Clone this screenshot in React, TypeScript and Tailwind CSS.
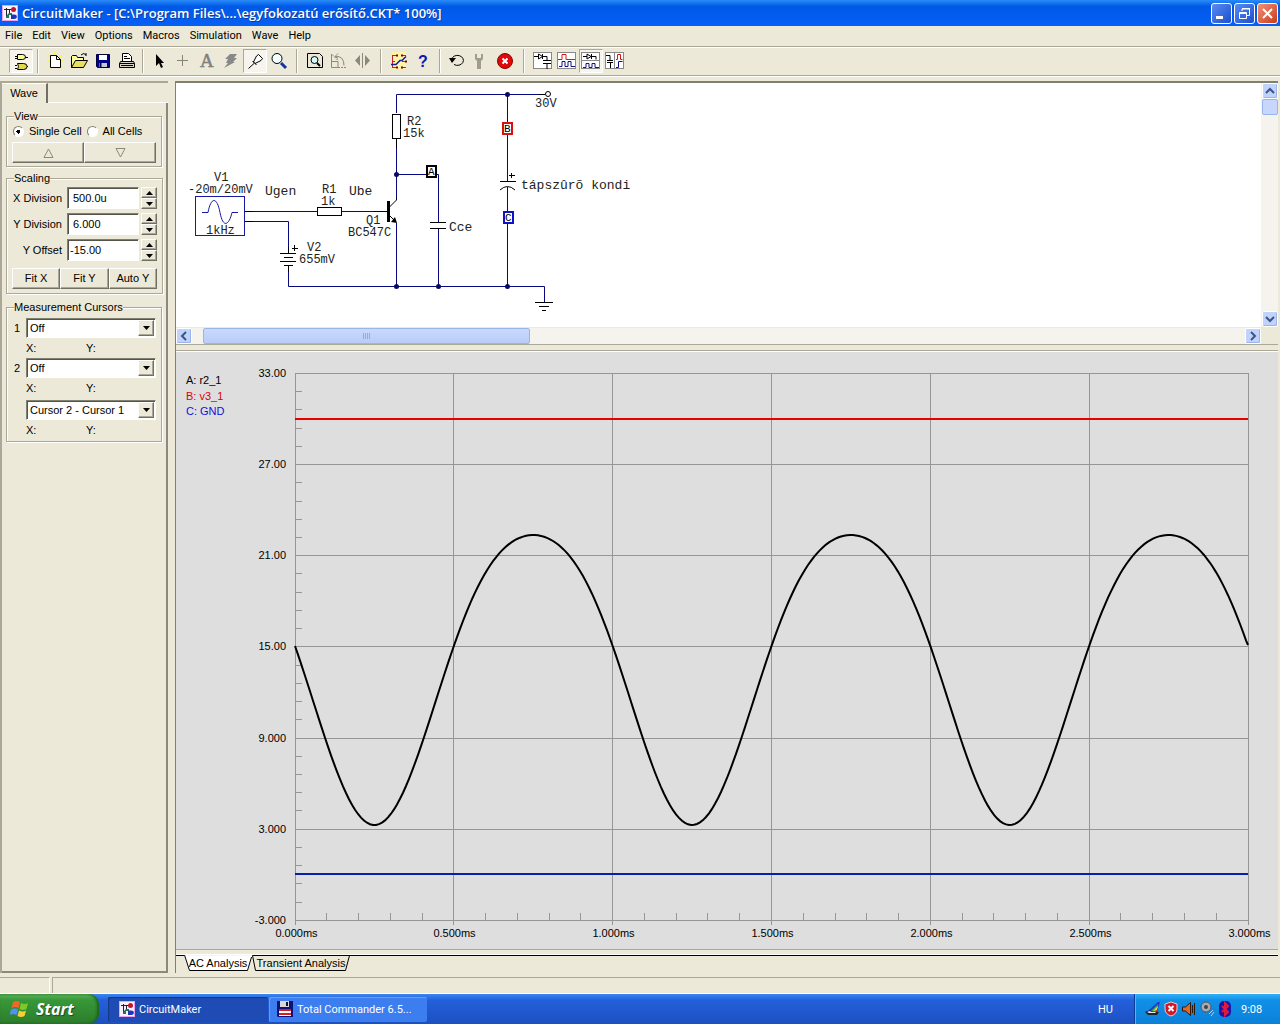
import React, { useState } from "react";
import clsx from "clsx";

const menuItems = ["File", "Edit", "View", "Options", "Macros", "Simulation", "Wave", "Help"];

// Plot geometry, in canvas units
const PLOT = { left: 295, right: 1248, top: 373, bottom: 920, zero: 646 };
const yLabels = ["33.00", "27.00", "21.00", "15.00", "9.000", "3.000", "-3.000"];
const xLabels = ["0.000ms", "0.500ms", "1.000ms", "1.500ms", "2.000ms", "2.500ms", "3.000ms"];

function gridX(i: number) {
  return Math.floor(PLOT.left + ((PLOT.right - PLOT.left) * i) / 6) + 0.5;
}

function gridY(i: number) {
  return Math.round(PLOT.top + ((PLOT.bottom - PLOT.top) * i) / 6 - 0.1) + 0.5;
}

// Collector voltage: sine with some second harmonic from the transistor
function tracePoints() {
  const points: string[] = [];
  const period = (PLOT.right - PLOT.left) / 3;
  for (let x = PLOT.left; x <= PLOT.right; x += 3) {
    const t = ((x - PLOT.left) / period) * Math.PI * 2;
    const y = PLOT.zero + 145 * Math.sin(t) + 17 * (1 - Math.cos(2 * t));
    points.push(`${x},${y.toFixed(1)}`);
  }
  points.push(`${PLOT.right},645`);
  return points.join(" ");
}

export default function App() {
  return (
    <div className="flex min-h-screen flex-col bg-[#ece9d8] font-['Liberation_Sans',Arial,sans-serif] text-[11px] leading-[13px] text-black select-none">
      <TitleBar />
      <nav className="flex h-5 items-center gap-[10px] pb-[2px] pl-[5px] font-['Roboto',sans-serif]">
        {menuItems.map((item) => (
          <button key={item} type="button">
            {item}
          </button>
        ))}
      </nav>
      <Toolbar />
      <div className="flex flex-1 pt-[5px]">
        <Sidebar />
        <main className="ml-[7px] mr-[2px] flex min-w-0 flex-1 flex-col border-t-2 border-l border-[#808070]">
          <Schematic />
          <Plot />
          <AnalysisTabs />
        </main>
      </div>
      {/* Status bar */}
      <div className="mt-1 flex h-[17px] gap-[2px] border-b border-white">
        <div className="w-[50px] border-t border-r border-t-[#aca899] border-r-white" />
        <div className="flex-1 border-t border-l border-[#aca899]" />
      </div>
      <Taskbar />
    </div>
  );
}

function AppLogo() {
  return (
    <svg viewBox="0 0 16 16" className="h-4 w-4 shrink-0" aria-hidden="true">
      <rect width="16" height="16" fill="#fdf0fd" />
      <rect x="0.5" y="0.5" width="15" height="15" fill="none" stroke="#f0a0e8" />
      <path d="M2 4.500h8M4.500 3v8M7.500 4v4" stroke="#222" fill="none" />
      <path d="M4 11l3-3h3v2H7v3H4z" fill="#1c7c50" />
      <circle cx="11.500" cy="4.500" r="2.500" fill="#c01828" />
      <path d="M9 9.500h3a2.500 2 0 0 1 0 4.500H9z" fill="#1838b8" />
    </svg>
  );
}

function TitleBar() {
  const base =
    "flex h-[21px] w-[21px] items-center justify-center rounded-[3px] border border-white text-white";
  return (
    <header className="flex h-[26px] items-center bg-linear-to-b from-[#2a8cf8] via-[#0058e6] via-25% to-[#0560f8] pr-[2px] pl-[2px]">
      <AppLogo />
      <h1 className="ml-1 flex-1 font-['Open_Sans',sans-serif] text-[13px] font-semibold text-white [text-shadow:1px_1px_0_#0c3c9c]">
        CircuitMaker - [C:\Program Files\...\egyfokozatú erősítő.CKT* 100%]
      </h1>
      <div className="flex gap-[2px]">
        <button type="button" aria-label="Minimize" className={clsx(base, "bg-linear-to-br from-[#5a8cf0] to-[#1c4cd0]")}>
          <svg viewBox="0 0 19 19" className="h-[19px] w-[19px]">
            <path d="M4 13.500h7" stroke="#fff" strokeWidth="3" />
          </svg>
        </button>
        <button type="button" aria-label="Restore" className={clsx(base, "bg-linear-to-br from-[#5a8cf0] to-[#1c4cd0]")}>
          <svg viewBox="0 0 19 19" className="h-[19px] w-[19px]" fill="none" stroke="#fff">
            <path d="M7 7V5h7.500v6.500H12M7 4.500h8" />
            <path d="M4.500 8.500h7v6h-7zM4 9.500h8" />
          </svg>
        </button>
        <button type="button" aria-label="Close" className={clsx(base, "bg-linear-to-br from-[#f09078] to-[#c83810]")}>
          <svg viewBox="0 0 19 19" className="h-[19px] w-[19px]">
            <path d="M5 5l9 9M14 5l-9 9" stroke="#fff" strokeWidth="2" />
          </svg>
        </button>
      </div>
    </header>
  );
}

function ToolButton({ label, pressed, children }: { label: string; pressed?: boolean; children: React.ReactNode }) {
  return (
    <button
      type="button"
      aria-label={label}
      className={clsx(
        "h-6 w-6 shrink-0 border",
        pressed ? "border-t-[#aca899] border-r-white border-b-white border-l-[#aca899] bg-[#f6f4ec]" : "border-transparent"
      )}
    >
      <svg viewBox="1 1 22 22" className="h-[22px] w-[22px] overflow-visible" fill="none" stroke="#000">
        {children}
      </svg>
    </button>
  );
}

function Divider({ className }: { className: string }) {
  return (
    <div className={clsx("flex shrink-0 justify-center", className)}>
      <div className="h-6 w-[2px] border-r border-l border-r-white border-l-[#aca899]" />
    </div>
  );
}

function Toolbar() {
  return (
    <div className="flex h-[30px] items-center border-t border-b border-[#aca899] pl-[9px] shadow-[inset_0_1px_0_#fff,0_1px_0_#fff]">
      <ToolButton label="Digital parts" pressed>
        <path d="M8.500 5.500h5a3 2.500 0 0 1 0 5h-5z" fill="#ffff90" />
        <path d="M6 7.500h2M6 9.500h2M16 8.500h3M6 16.500h2M6 19.500h2M16 17.500h3" />
        <path d="M8.500 14.500h6a3 2.500 0 0 1 0 6h-6q2-3 0-6z" fill="#e0d850" />
      </ToolButton>
      <Divider className="w-[10px]" />
      <ToolButton label="New">
        <path d="M5 6l14 12M6 18L19 6M12 3v3M4 12h3M17 12h3" stroke="#f8f830" strokeWidth="1.500" />
        <path d="M7.500 6.500h6l4 4v8h-10z" fill="#fff" />
        <path d="M13.500 6.500v4h4" />
      </ToolButton>
      <ToolButton label="Open">
        <path d="M4.500 18.500v-11l1-1h4l1 2h6v3" fill="#ffff9c" />
        <path d="M4.500 18.500l4-7h12l-4 7z" fill="#e8e060" />
        <path d="M14 6q3-3 5 0M19 4v3" />
      </ToolButton>
      <ToolButton label="Save">
        <path d="M5.500 5.500h13v13h-12l-1-1z" fill="#000088" stroke="#000040" />
        <path d="M8 6h8v5H8z" fill="#fff" stroke="none" />
        <path d="M8 14h8v4H8z" fill="#c8c8d0" stroke="none" />
        <path d="M9.500 14v4" stroke="#000060" strokeWidth="2" />
      </ToolButton>
      <ToolButton label="Print">
        <path d="M7.500 12v-7.500h6l3 3v4.500" fill="#fff" />
        <path d="M9 7.500h3M9 9.500h6" />
        <path d="M5.500 12.500h13l1 2v4h-15v-4z" fill="#d8d4c8" />
        <path d="M4.500 14.500h15M6 16.500h12" />
      </ToolButton>
      <Divider className="w-[8px]" />
      <ToolButton label="Arrow">
        <path d="M9 5v12l3-3 2 5 2-1-2-4h3z" fill="#000" stroke="none" />
      </ToolButton>
      <ToolButton label="Wire">
        <path d="M6 11.500h11M11.500 6v11" stroke="#888478" />
      </ToolButton>
      <ToolButton label="Text">
        <text x="5" y="18" fontSize="19" fontFamily="Liberation Serif, serif" fill="#808080" stroke="#808080" strokeWidth="0.500">
          A
        </text>
      </ToolButton>
      <ToolButton label="Delete">
        <path d="M11 5h7l-3 4h3l-4 4h2L5 19l4-5H7l2-4H6z" fill="#888" stroke="none" />
      </ToolButton>
      <ToolButton label="Probe" pressed>
        <path d="M10.500 13l3-6 2-1.500 4 4-1.500 2-6 3z" fill="#fff" />
        <path d="M9.500 12l4 4M11 14.500l-5.500 5" />
      </ToolButton>
      <ToolButton label="Zoom">
        <circle cx="10" cy="9.500" r="5" fill="#f4ffff" />
        <path d="M14 14l5 5" stroke="#1830a8" strokeWidth="3" />
      </ToolButton>
      <Divider className="w-[12px]" />
      <ToolButton label="Fit to window">
        <path d="M4.500 4.500h12l3 3v11h-15z" />
        <circle cx="11.500" cy="11" r="3.500" fill="#d0fcf8" />
        <path d="M14 14l3 3" strokeWidth="2" />
      </ToolButton>
      <ToolButton label="Rotate">
        <g stroke="#8c887c">
          <path d="M4.500 5v13.500h7M5 12.500h6v6" />
          <path d="M11 18.500h9M5 5.500l6 6" strokeDasharray="2 1" />
          <path d="M8 7.500q9-1 9 9M8 7.500l3-3M8 7.500l3 2" />
        </g>
      </ToolButton>
      <ToolButton label="Mirror">
        <path d="M11.500 4v15" stroke="#8c887c" />
        <path d="M9 6v11l-5-5.500zM14 6v11l5-5.500z" fill="#8c887c" stroke="none" />
      </ToolButton>
      <Divider className="w-[12px]" />
      <ToolButton label="Run digital options">
        <rect x="5" y="3" width="14" height="17" fill="#fff5a8" stroke="none" />
        <path d="M5 6.500h5M15 6.500h4M5 12.500h3M15 12.500h4M5 18.500h5M15 18.500h4M5.500 6v12" stroke="#c02028" />
        <path d="M4 15.500h5l4-4h2l4-4" stroke="#1020a0" strokeWidth="1.500" />
        <path d="M9 6.500h2M14 6.500h2M9 18.500h2M14 18.500h2M18 12.500h2" stroke="#800" strokeWidth="2" />
      </ToolButton>
      <ToolButton label="Help">
        <text x="7" y="18" fontSize="16" fontFamily="Liberation Sans, sans-serif" fontWeight="bold" fill="#1414b4" stroke="none">
          ?
        </text>
      </ToolButton>
      <Divider className="w-[10px]" />
      <ToolButton label="Reset">
        <path d="M6.500 10.500a6 5 0 1 1 2.500 5" />
        <path d="M4 9h7l-4 5z" fill="#000" stroke="none" />
      </ToolButton>
      <ToolButton label="Step">
        <path d="M6 5v5l2 2v8h4v-8l2-2V5h-2v4H8V5z" fill="#a09c90" stroke="none" />
      </ToolButton>
      <ToolButton label="Stop">
        <circle cx="12" cy="12" r="7.500" fill="#e00808" stroke="#900000" />
        <path d="M9.500 9.500l5 5M14.500 9.500l-5 5" stroke="#fff" strokeWidth="2" />
      </ToolButton>
      <Divider className="w-[14px]" />
      <ToolButton label="Schematic only">
        <rect x="2.500" y="3.500" width="18" height="16" fill="#fff" stroke="#888" />
        <path d="M3 7.500h4M7.500 5v5l4-2.500zM11.500 5v5M12 7.500h4v4M12 11.500h8M12 14.500h8M16 15v5" />
      </ToolButton>
      <ToolButton label="Waves only">
        <rect x="2.500" y="3.500" width="18" height="16" fill="#fff" stroke="#888" />
        <path d="M3 10.500h4v-5h4v5h9" stroke="#d01818" />
        <path d="M4 17.500h3v-5h3v5h3v-5h3v5h4" stroke="#101080" />
      </ToolButton>
      <ToolButton label="Split horizontal" pressed>
        <rect x="2.500" y="3.500" width="18" height="16" fill="#fff" stroke="#888" />
        <path d="M3 11.500h17" stroke="#888" />
        <path d="M4 7.500h4M8 5v5l4-2.500zM12.500 5v5M12 7.500h5v3" />
        <path d="M4 18.500h3v-4h3v4h3v-4h3v4h4" stroke="#101080" />
      </ToolButton>
      <ToolButton label="Split vertical">
        <rect x="2.500" y="3.500" width="18" height="16" fill="#fff" stroke="#888" />
        <path d="M11.500 4v15" stroke="#888" />
        <path d="M3 6.500h4v5M4 11.500h6M4 13.500h6M7.500 14v5" />
        <path d="M13 10.500h1.500v-5h3v5h2" stroke="#d01818" />
        <path d="M13 18.500h2.500v-6h4" stroke="#101080" />
      </ToolButton>
    </div>
  );
}

const raised = "border border-t-white border-l-white border-r-[#716f64] border-b-[#716f64] shadow-[inset_-1px_-1px_0_#aca899]";
const sunken = "border border-t-[#808070] border-l-[#808070] border-r-white border-b-white shadow-[inset_1px_1px_0_#55534a]";

function Group({ title, className, children }: { title: string; className?: string; children: React.ReactNode }) {
  return (
    <fieldset className={clsx("border border-[#aca899] px-[5px] shadow-[1px_1px_0_#fff,inset_1px_1px_0_#fff]", className)}>
      <legend className="ml-[2px] h-[14px] bg-[#ece9d8] leading-[14px]">{title}</legend>
      {children}
    </fieldset>
  );
}

function Spinner({ label, value }: { label: string; value: string }) {
  const [text, setText] = useState(value);
  return (
    <div className="flex h-[22px] items-center">
      <label htmlFor={label} className="w-[55px] pr-[5px] text-right whitespace-nowrap">
        {label}
      </label>
      <input
        id={label}
        value={text}
        onChange={(e) => setText(e.target.value)}
        className={clsx("h-[22px] w-[72px] bg-white outline-none", text.startsWith("-") ? "pl-[2px]" : "pl-[5px]", sunken)}
      />
      <div className="ml-[2px] flex flex-col">
        <button type="button" aria-label={label + " up"} className={clsx("flex h-[11px] w-4 items-center justify-center", raised)}>
          <svg viewBox="0 0 7 4" className="h-1 w-[7px]">
            <path d="M0 4L3.500 0L7 4z" />
          </svg>
        </button>
        <button type="button" aria-label={label + " down"} className={clsx("flex h-[11px] w-4 items-center justify-center", raised)}>
          <svg viewBox="0 0 7 4" className="h-1 w-[7px]">
            <path d="M0 0L3.500 4L7 0z" />
          </svg>
        </button>
      </div>
    </div>
  );
}

function Combo({ label, options }: { label: string; options: string[] }) {
  return (
    <div className={clsx("relative h-5 w-[130px] bg-white", sunken)}>
      <select aria-label={label} className="h-[18px] w-full appearance-none pl-[3px] outline-none">
        {options.map((o) => (
          <option key={o}>{o}</option>
        ))}
      </select>
      <span className={clsx("pointer-events-none absolute top-px right-px flex h-4 w-4 items-center justify-center bg-[#ece9d8]", raised)}>
        <svg viewBox="0 0 7 4" className="h-1 w-[7px]">
          <path d="M0 0L3.500 4L7 0z" />
        </svg>
      </span>
    </div>
  );
}

function CursorReadout() {
  return (
    <div className="flex h-5 items-center pl-[14px]">
      <span className="w-[60px]">X:</span>
      <span>Y:</span>
    </div>
  );
}

function Sidebar() {
  const [cell, setCell] = useState("Single Cell");
  return (
    <aside className="flex w-[168px] shrink-0 flex-col border-t-2 border-l-2 border-[#aca899]">
      <div className="flex h-5">
        <button type="button" className="w-[46px] border-t border-r-2 border-t-white border-r-[#716f64]">
          Wave
        </button>
        <div className="flex-1 border-b border-white" />
      </div>
      <div className="flex flex-1 flex-col border-r-2 border-b-2 border-[#8c897c] px-1 pt-[6px]">
        <Group title="View" className="h-[58px]">
          <div className="flex h-4 items-center pl-[1px]">
            {["Single Cell", "All Cells"].map((name) => (
              <label key={name} className="mr-[5px] flex items-center gap-[5px] whitespace-nowrap">
                <input
                  type="radio"
                  name="cells"
                  checked={cell === name}
                  onChange={() => setCell(name)}
                  className="h-[11px] w-[11px] appearance-none rounded-full border border-t-[#808070] border-r-white border-b-white border-l-[#808070] bg-white checked:bg-[radial-gradient(circle,#000_2px,#fff_2px)]"
                />
                {name}
              </label>
            ))}
          </div>
          <div className="mt-[3px] flex">
            <button type="button" aria-label="Previous cell" className={clsx("flex h-[21px] flex-1 items-center justify-center", raised)}>
              <svg viewBox="0 0 11 10" className="h-[10px] w-[11px]" fill="none" stroke="#8c897c">
                <path d="M1 9.500L5.500 1L10 9.500z" />
              </svg>
            </button>
            <button type="button" aria-label="Next cell" className={clsx("flex h-[21px] flex-1 items-center justify-center", raised)}>
              <svg viewBox="0 0 11 10" className="h-[10px] w-[11px]" fill="none" stroke="#8c897c">
                <path d="M1 0.500L5.500 9L10 0.500z" />
              </svg>
            </button>
          </div>
        </Group>
        <Group title="Scaling" className="mt-1 h-[123px]">
          <div className="flex flex-col gap-1 pt-[2px]">
            <Spinner label="X Division" value="500.0u" />
            <Spinner label="Y Division" value="6.000" />
            <Spinner label="Y Offset" value="-15.00" />
          </div>
          <div className="mt-[7px] flex">
            {["Fit X", "Fit Y", "Auto Y"].map((name) => (
              <button key={name} type="button" className={clsx("h-[21px] flex-1", raised)}>
                {name}
              </button>
            ))}
          </div>
        </Group>
        <Group title="Measurement Cursors" className="mt-[6px] h-[142px]">
          <div className="flex items-center justify-between pt-1 pl-[2px]">
            <span>1</span>
            <Combo label="Cursor 1" options={["Off"]} />
          </div>
          <CursorReadout />
          <div className="flex items-center justify-between pl-[2px]">
            <span>2</span>
            <Combo label="Cursor 2" options={["Off"]} />
          </div>
          <CursorReadout />
          <div className="flex justify-end pt-[2px]">
            <Combo label="Cursor difference" options={["Cursor 2 - Cursor 1"]} />
          </div>
          <CursorReadout />
        </Group>
      </div>
    </aside>
  );
}

function ScrollButton({ label, d }: { label: string; d: string }) {
  return (
    <button type="button" aria-label={label} className="h-4 w-4 shrink-0 rounded-[2px] border border-white bg-[#c1d3fb] shadow-[inset_-1px_-1px_0_#9ab4ec]">
      <svg viewBox="0 0 14 14" className="h-[14px] w-[14px]" fill="none" stroke="#3c5488" strokeWidth="2">
        <path d={d} />
      </svg>
    </button>
  );
}

function Schematic() {
  return (
    <section className="flex flex-col border-b border-[#aca899]">
      <div className="flex h-[244px]">
        <div className="min-w-0 flex-1 overflow-hidden bg-white">
          <CircuitDrawing />
        </div>
        <div className="flex w-[17px] flex-col bg-[#f4f3ee] pl-px">
          <ScrollButton label="Scroll up" d="M3 9l4-4 4 4" />
          <div className="h-4 w-4 rounded-[2px] border border-[#9ab4ec] bg-[#c6d6fd]" />
          <div className="flex-1" />
          <ScrollButton label="Scroll down" d="M3 5l4 4 4-4" />
        </div>
      </div>
      <div className="flex h-[17px] items-center pr-[17px]">
        <div className="flex flex-1 bg-[#f4f3ee]">
          <ScrollButton label="Scroll left" d="M9 3L5 7l4 4" />
          <div className="ml-[11px] flex h-4 w-[327px] items-center justify-center gap-px rounded-[2px] border border-[#9ab4ec] bg-linear-to-b from-[#cad9fd] to-[#b8ccf8]">
            {[0, 1, 2, 3].map((i) => (
              <i key={i} className="h-[6px] w-px bg-[#8cacf0]" />
            ))}
          </div>
          <div className="flex-1" />
          <ScrollButton label="Scroll right" d="M5 3l4 4-4 4" />
        </div>
      </div>
    </section>
  );
}

function Probe({ x, y, name, color }: { x: number; y: number; name: string; color: string }) {
  return (
    <g>
      <rect x={x} y={y} width="9" height="11" fill="#fff" stroke={color} strokeWidth="2" />
      <text x={x + 1} y={y + 9} fontSize="11" fill="#000">
        {name}
      </text>
    </g>
  );
}

function CircuitDrawing() {
  return (
    <svg viewBox="176 83 480 244" className="h-[244px] w-[480px]" fontFamily="Liberation Mono, monospace" fontSize="12" fill="#222">
      <g fill="none" stroke="#080880">
        <path d="M396.500 113V94.500h143M507.500 94v87M396.500 145v53M396 174.500h42.500V222M438.500 229v57" />
        <path d="M252 211.500h65M342 211.500h32M252 221.500h36.500V247M288.500 272v14.500h256V302M396.500 223v63M507.500 187v99" />
        <rect x="195.500" y="196.500" width="49" height="39" stroke="#1818a0" />
        <path d="M202 212.500h6c3-16 9-16 12 0s9 13 12 0h6" stroke="#1818a0" />
      </g>
      <g fill="none" stroke="#000">
        <path d="M245 211.500h8M245 221.500h8M374 211.500h14M396.500 198v2l-7 7M389 215l7 7M396.500 138v10M539 94.500h6M288.500 247v6" />
        <rect x="392.500" y="114.500" width="8" height="24" fill="#fff" />
        <rect x="317.500" y="207.500" width="24" height="8" fill="#fff" />
        <circle cx="548" cy="94" r="2.500" fill="#fff" />
        <path d="M388.500 201v21" strokeWidth="3" />
        <path d="M430 222.500h16M430 228.500h16" />
        <path d="M500 181.500h16M500 190q7.500-7 15 0M509 175.500h6M511.500 173v5" />
        <path d="M280 253.500h16M284 257.500h9M280 261.500h16M284 265.500h9M288.500 265v7M292 248.500h6M294.500 245v6" />
        <path d="M535 302.500h18M539 306.500h10M542 310.500h4" />
      </g>
      <path d="M397 223l-6-1 4-5z" fill="#000" />
      <g fill="#080860">
        <circle cx="507.500" cy="94.500" r="2.500" />
        <circle cx="396.500" cy="174.500" r="2.500" />
        <circle cx="396.500" cy="286.500" r="2.500" />
        <circle cx="438.500" cy="286.500" r="2.500" />
        <circle cx="507.500" cy="286.500" r="2.500" />
      </g>
      <text x="214" y="181">V1</text>
      <text x="188" y="193">-20m/20mV</text>
      <text x="206" y="234">1kHz</text>
      <text x="322" y="193">R1</text>
      <text x="321" y="205">1k</text>
      <text x="407" y="125">R2</text>
      <text x="403" y="137">15k</text>
      <text x="366" y="224">Q1</text>
      <text x="348" y="236">BC547C</text>
      <text x="307" y="251">V2</text>
      <text x="299" y="263">655mV</text>
      <text x="535" y="107">30V</text>
      <g fontSize="13">
        <text x="265" y="195">Ugen</text>
        <text x="349" y="195">Ube</text>
        <text x="449" y="231">Cce</text>
        <text x="521" y="189">tápszûrõ kondi</text>
      </g>
      <Probe x={427} y={166} name="A" color="#000" />
      <Probe x={503} y={123} name="B" color="#d81010" />
      <Probe x={504} y={212} name="C" color="#1010c8" />
    </svg>
  );
}

function Plot() {
  const steps = [0, 1, 2, 3, 4, 5, 6];
  const minor = Array.from({ length: 30 }, (_, i) => i).filter((i) => i % 5 !== 0);
  return (
    <section className="mt-[5px] flex-1 border-t border-b border-[#aca899] bg-[#dedede] shadow-[inset_0_1px_0_#fff]">
      <svg viewBox="176 351 1102 597" className="h-auto w-full" fontFamily="Liberation Sans, Arial, sans-serif" fontSize="11">
        <g stroke="#969696">
          {steps.map((i) => (
            <path key={i} d={`M${gridX(i)} 373V925M295 ${gridY(i)}H1249`} />
          ))}
          {minor.map((i) => (
            <path key={i} d={`M${gridX(i / 5)} 913v7M295 ${gridY(i / 5)}h7`} />
          ))}
        </g>
        <path d="M295 419H1248" stroke="#e80000" strokeWidth="2" />
        <path d="M295 874H1248" stroke="#0a1eac" strokeWidth="2" />
        <polyline points={tracePoints()} fill="none" stroke="#000" strokeWidth="2" />
        {yLabels.map((label, i) => (
          <text key={label} x="286" y={gridY(i) + 3.5} textAnchor="end">
            {label}
          </text>
        ))}
        {xLabels.map((label, i) => (
          <text key={label} x={gridX(i) + 1} y="937" textAnchor="middle">
            {label}
          </text>
        ))}
        <text x="186" y="384">A: r2_1</text>
        <text x="186" y="400" fill="#e00000">B: v3_1</text>
        <text x="186" y="415" fill="#1010e0">C: GND</text>
      </svg>
    </section>
  );
}

function AnalysisTabs() {
  return (
    <div className="mt-1 flex h-[19px] shadow-[inset_0_1px_0_#fff]">
      <div className="mt-px h-px w-[8px] bg-black" />
      <button type="button" className="relative mt-px h-4 w-[68px]">
        <svg viewBox="0 0 68 16" className="absolute inset-0 h-4 w-[68px]" fill="#fff" stroke="#000">
          <path d="M0 0.500L5.500 15.500H63.500L68 0.500" stroke="none" />
          <path d="M0.500 0L5.500 15.500H63.500L67.500 2" fill="none" />
        </svg>
        <span className="relative">AC Analysis</span>
      </button>
      <button type="button" className="relative mt-px h-4 w-[98px]">
        <svg viewBox="0 0 98 16" className="absolute inset-0 h-4 w-[98px]" fill="none" stroke="#000">
          <path d="M98 0.500H0.500L3.500 15.500H93.500L97.500 0.500" />
        </svg>
        <span className="relative">Transient Analysis</span>
      </button>
      <div className="mt-px h-px flex-1 bg-black" />
    </div>
  );
}

function Taskbar() {
  return (
    <footer className="flex h-[30px] items-center bg-linear-to-b from-[#3c86f0] via-[#2460dc] via-20% to-[#1c50c0] font-['Roboto',sans-serif] text-white">
      <button
        type="button"
        className="flex h-[30px] w-[99px] items-center rounded-r-[10px] bg-linear-to-b from-[#5cb45c] via-[#389838] via-20% to-[#2c7c2c] pl-[10px] shadow-[inset_-2px_0_3px_#1c601c]"
      >
        <svg viewBox="0 0 20 18" className="h-[18px] w-5" aria-hidden="true">
          <path d="M3 2q4-2 7 0L8.500 8Q5 6 1.500 8z" fill="#f06828" />
          <path d="M11 3q4 2 7 0l-1.500 6Q13 11 9.500 9z" fill="#80c828" />
          <path d="M1 9.500q4-2 7 0L6.500 15Q3 13-.5 15z" fill="#5090f8" />
          <path d="M9 10.500q4 2 7 0L14.500 16Q11 18 7.500 16z" fill="#f8d030" />
        </svg>
        <span className="ml-[6px] font-['Open_Sans',sans-serif] text-[16px] font-bold italic [text-shadow:1px_1px_1px_#1c4c1c]">Start</span>
      </button>
      <button type="button" className="ml-[9px] flex h-[25px] w-[160px] items-center rounded-[2px] bg-[#1e4cb4] pl-[11px] shadow-[inset_1px_1px_1px_#143884]">
        <AppLogo />
        <span className="ml-1">CircuitMaker</span>
      </button>
      <button type="button" className="ml-px flex h-[25px] w-[158px] items-center rounded-[2px] bg-[#3c7ef0] pl-2 shadow-[inset_1px_1px_1px_#68a0f8]">
        <svg viewBox="0 0 16 16" className="h-4 w-4" aria-hidden="true">
          <path d="M0 0h16v16H1L0 15z" fill="#10107c" />
          <path d="M3 0h9v6H3z" fill="#d8d8d8" />
          <path d="M9 1h2v4H9z" fill="#101040" />
          <path d="M2 8h12v7H2z" fill="#fff" />
          <path d="M2 8h12v2H2zM2 12h12v2H2z" fill="#d02020" />
        </svg>
        <span className="ml-1">Total Commander 6.5...</span>
      </button>
      <span className="ml-auto mr-[21px]">HU</span>
      <div className="flex h-[30px] w-[146px] items-center gap-[2px] border-l border-[#0c3c98] bg-linear-to-b from-[#30b0f8] via-[#1090e8] via-20% to-[#0c80d8] pl-[10px] shadow-[inset_1px_0_0_#40c0ff]">
        <svg viewBox="0 0 16 16" className="h-4 w-4">
          <path d="M4 9l9-8h2l-3 10H5z" fill="#2838c0" />
          <path d="M6 10l7-7-1 8z" fill="#30a850" />
          <path d="M8 10l5-5-1 4z" fill="#f0e040" />
          <path d="M10 11l3-4v4z" fill="#d02020" />
          <path d="M0 11l5-2 1 2h8l-2 3H3z" fill="#202430" />
          <path d="M2 11l3-1 1 1h5l-1 1H4z" fill="#e8e8f0" />
        </svg>
        <svg viewBox="0 0 16 16" className="h-4 w-4">
          <path d="M8 1l6 2v5q0 5-6 7-6-2-6-7V3z" fill="#d01828" stroke="#f0c8c8" />
          <path d="M5.500 5l5 5M10.500 5l-5 5" stroke="#fff" strokeWidth="2" />
        </svg>
        <svg viewBox="0 0 16 16" className="h-4 w-4" stroke="#301808">
          <path d="M1.500 6h3l5-4.500v13L4.500 10h-3z" fill="#e06830" />
          <path d="M11.500 4v8M13.500 2v12" fill="none" />
        </svg>
        <svg viewBox="0 0 16 16" className="h-4 w-4">
          <circle cx="7" cy="6" r="5" fill="#a8acb0" stroke="#50545c" />
          <circle cx="7" cy="6" r="2" fill="#40444c" />
          <path d="M10 13l4-4M12 15l3-4" stroke="#a8d0f8" />
        </svg>
        <svg viewBox="0 0 16 16" className="h-4 w-4">
          <rect x="2" y="0" width="12" height="16" rx="5" fill="#1818a8" />
          <path d="M5 5l6 6-3 3V2l3 3-6 6" fill="none" stroke="#e81838" strokeWidth="2" />
        </svg>
        <time className="ml-[6px]">9:08</time>
      </div>
    </footer>
  );
}
